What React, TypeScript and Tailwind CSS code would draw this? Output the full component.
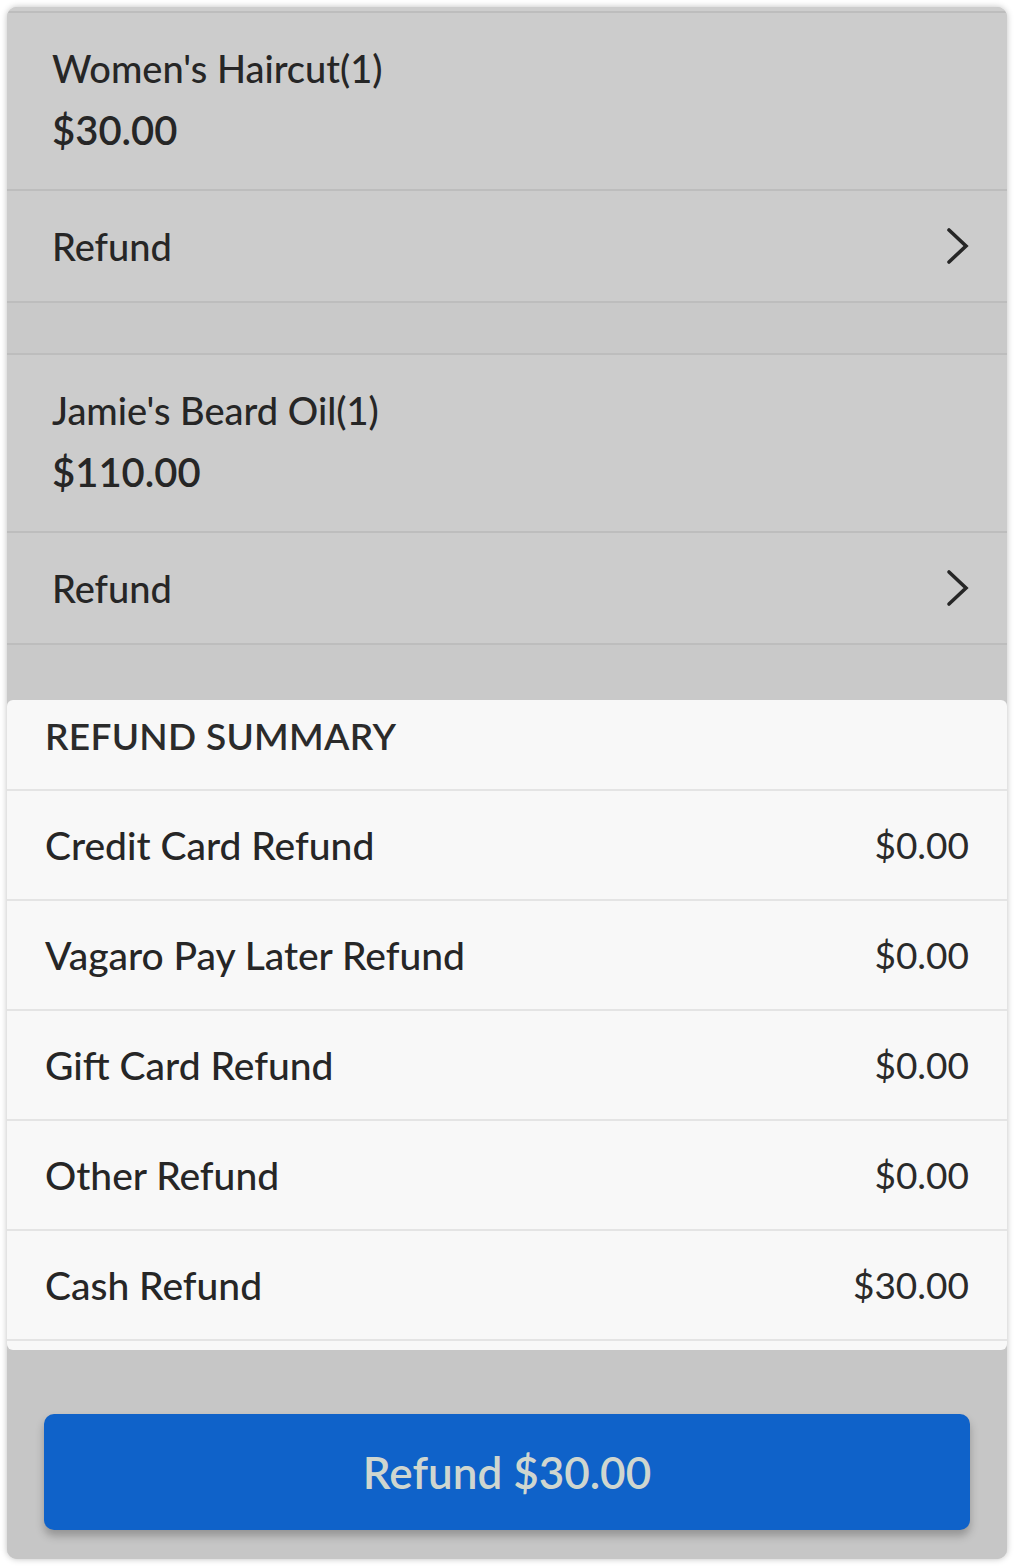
import React from "react";

const Chevron = () => (
  <svg width="26" height="40" viewBox="0 0 26 40" fill="none">
    <path d="M4 4 L21 20 L4 36" stroke="#262626" strokeWidth="3.6" strokeLinecap="round" strokeLinejoin="miter" />
  </svg>
);

const Item = ({ name, price }: { name: string; price: string }) => (
  <>
    <div className="h-[178px] flex flex-col justify-center pl-[45px] pb-[4px] border-b-2 border-[#bdbdbd]">
      <div className="text-[38px] font-medium text-[#262626] leading-[44px]">{name}</div>
      <div className="text-[40px] font-semibold text-[#262626] leading-[44px] mt-[18px]">{price}</div>
    </div>
    <div className="h-[112px] flex items-center justify-between pl-[45px] pr-[36px] border-b-2 border-[#bdbdbd]">
      <div className="text-[38px] font-medium text-[#262626]">Refund</div>
      <Chevron />
    </div>
  </>
);

const Row = ({ label, value }: { label: string; value: string }) => (
  <div className="h-[110px] flex items-center justify-between pl-[38px] pr-[38px] border-b-2 border-[#e4e4e4]">
    <div className="text-[39px] font-medium text-[#262626]">{label}</div>
    <div className="text-[37px] font-normal text-[#2a2a2a]">{value}</div>
  </div>
);

export default function App() {
  return (
    <div className="w-[1015px] h-[1566px] bg-white p-[7px] pb-[7px]" style={{ fontFamily: "Lato, 'Open Sans', sans-serif" }}>
      <div className="w-[1000px] h-[1552px] rounded-[10px] bg-[#c8c8c8] shadow-[0_0_6px_rgba(0,0,0,0.25)] overflow-hidden flex flex-col">
        <div className="pt-[4px] bg-[#cdcdcd]">
          <div className="border-t-2 border-[#bdbdbd] bg-[#cccccc]">
            <Item name="Women's Haircut(1)" price="$30.00" />
          </div>
          <div className="h-[52px] bg-[#c9c9c9] border-b-2 border-[#bdbdbd]" />
          <div className="bg-[#cccccc]">
            <Item name="Jamie's Beard Oil(1)" price="$110.00" />
          </div>
          <div className="h-[55px] bg-[#c9c9c9]" />
        </div>
        <div className="bg-[#f8f8f8] rounded-[6px] h-[650px] flex flex-col">
          <div className="h-[91px] flex items-center pl-[38px] border-b-2 border-[#e4e4e4] pb-[18px]">
            <div className="text-[37px] font-semibold text-[#2b2b2b] tracking-[0.3px]">REFUND SUMMARY</div>
          </div>
          <Row label="Credit Card Refund" value="$0.00" />
          <Row label="Vagaro Pay Later Refund" value="$0.00" />
          <Row label="Gift Card Refund" value="$0.00" />
          <Row label="Other Refund" value="$0.00" />
          <Row label="Cash Refund" value="$30.00" />
        </div>
        <div className="flex-1 bg-[#c6c6c6] px-[37px] pt-[64px]">
          <button className="w-[926px] h-[116px] rounded-[10px] bg-[#0f62c9] shadow-[0_6px_8px_rgba(0,0,0,0.25)] flex items-center justify-center">
            <span className="text-[44px] font-semibold text-[#cfd6cf]">Refund $30.00</span>
          </button>
        </div>
      </div>
    </div>
  );
}
